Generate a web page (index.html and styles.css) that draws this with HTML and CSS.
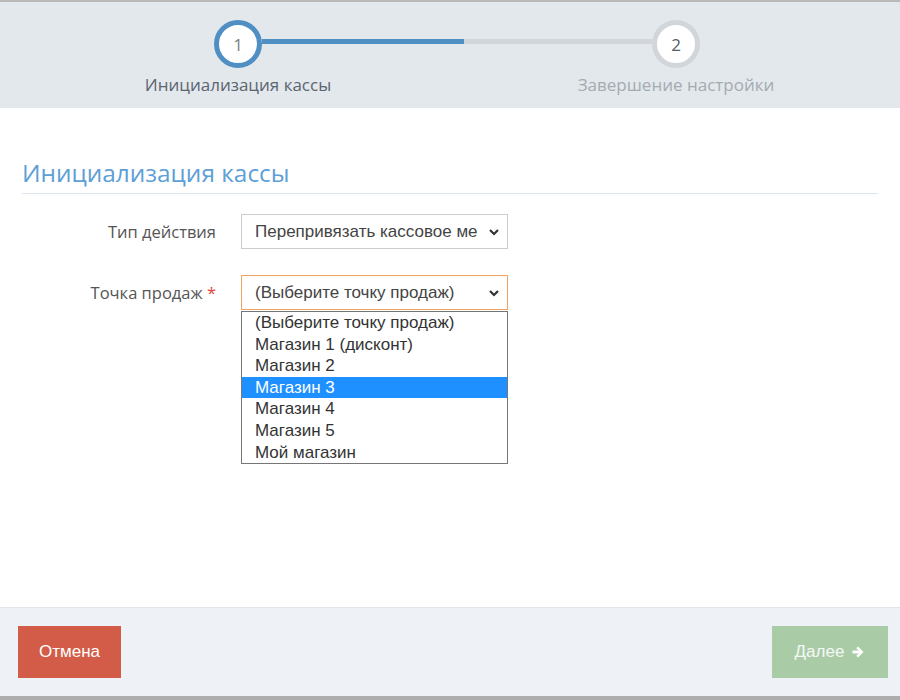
FILE: index.html
```html
<!DOCTYPE html>
<html>

<head>
    <meta charset="utf-8">
    <link rel="stylesheet" href="styles.css">
</head>

<body>
    <main class="wizard">
        <!-- steps -->
        <section class="steps">
            <div class="track">
                <div class="circle active">1</div>
                <div class="bar"><div class="bar-fill"></div></div>
                <div class="circle">2</div>
            </div>
            <div class="step-labels">
                <span class="step-label active">Инициализация кассы</span>
                <span class="step-label">Завершение настройки</span>
            </div>
        </section>

        <!-- form -->
        <section class="content">
            <h2 class="title">Инициализация кассы</h2>
            <div class="form">
                <label class="form-label">Тип действия</label>
                <div class="select">
                    <span class="select-text">Перепривязать кассовое ме</span>
                    <svg class="chevron" width="12" height="8" viewBox="0 0 12 8">
                        <polyline points="2,2 6,6 10,2" fill="none" stroke="#333" stroke-width="2.2" />
                    </svg>
                </div>

                <label class="form-label">Точка продаж <span class="req">*</span></label>
                <div class="select-wrap">
                    <div class="select focused">
                        <span class="select-text">(Выберите точку продаж)</span>
                        <svg class="chevron" width="12" height="8" viewBox="0 0 12 8">
                            <polyline points="2,2 6,6 10,2" fill="none" stroke="#333" stroke-width="2.2" />
                        </svg>
                    </div>
                    <ul class="options">
                        <li>(Выберите точку продаж)</li>
                        <li>Магазин 1 (дисконт)</li>
                        <li>Магазин 2</li>
                        <li class="hover">Магазин 3</li>
                        <li>Магазин 4</li>
                        <li>Магазин 5</li>
                        <li>Мой магазин</li>
                    </ul>
                </div>
            </div>
        </section>

        <!-- buttons -->
        <footer class="footer">
            <button class="btn btn-cancel">Отмена</button>
            <button class="btn btn-next">Далее
                <svg width="14" height="14" viewBox="0 0 14 14">
                    <path d="M1.5 5.6h6.2L5.3 3.2l1.7-1.7 5.5 5.5-5.5 5.5-1.7-1.7 2.4-2.4H1.5z" fill="#fff" />
                </svg>
            </button>
        </footer>
    </main>
</body>

</html>
```

FILE: styles.css
```css
* {
    margin: 0;
    padding: 0;
    box-sizing: border-box;
}

body {
    width: 900px;
    height: 700px;
    font-family: "Open Sans", sans-serif;
    background-color: #fff;
}

main.wizard {
    height: 700px;
    display: flex;
    flex-direction: column;
    border-top: 2px solid #b9b9b9;
    border-bottom: 4px solid #adadad;
}

/* steps */
.steps {
    height: 106px;
    background-color: #e3e8ec;
    padding-top: 18px;
}

.track {
    display: flex;
    align-items: flex-start;
    margin-left: 214px;
    width: 486px;
}

.circle {
    width: 48px;
    height: 48px;
    border-radius: 50%;
    border: 5px solid #d2d6da;
    background-color: #fff;
    display: flex;
    align-items: center;
    justify-content: center;
    font-size: 17px;
    color: #505c68;
}

.circle.active {
    border-color: #4f8fc3;
    color: #7a7f85;
}

.bar {
    flex: 1;
    height: 5px;
    margin-top: 19px;
    background-color: #d2d6da;
}

.bar-fill {
    width: 202px;
    height: 100%;
    background-color: #4f8fc3;
}

.step-labels {
    display: flex;
    gap: 238px;
    margin-left: 138px;
    margin-top: 5px;
}

.step-label {
    width: 200px;
    text-align: center;
    font-size: 17px;
    color: #a4abb2;
    white-space: nowrap;
}

.step-label.active {
    color: #5b6571;
}

/* form */
.content {
    flex: 1;
    padding: 48px 22px 0;
}

.title {
    font-weight: normal;
    font-size: 24.4px;
    line-height: 34px;
    color: #5d9fd6;
    padding-bottom: 3px;
    border-bottom: 1px solid #dde6ee;
}

.form {
    display: grid;
    grid-template-columns: 194px 267px;
    column-gap: 25px;
    row-gap: 26px;
    margin-top: 20px;
}

.form-label {
    text-align: right;
    align-self: center;
    font-size: 16.5px;
    color: #555;
}

.req {
    color: #e2453a;
}

.select-wrap {
    position: relative;
}

.select {
    height: 35px;
    border: 1px solid #ccc;
    display: flex;
    align-items: center;
    padding: 1px 7px 0 13px;
    font-family: "Liberation Sans", Arial, sans-serif;
    font-size: 17px;
    color: #444;
    background-color: #fff;
}

.select.focused {
    border-color: #f0a25e;
}

.select-text {
    flex: 1;
    white-space: nowrap;
    overflow: hidden;
}

.chevron {
    margin-left: 6px;
}

.options {
    position: absolute;
    top: 36px;
    left: 0;
    width: 100%;
    list-style: none;
    border: 1px solid #767676;
    background-color: #fff;
    font-family: "Liberation Sans", Arial, sans-serif;
    font-size: 17px;
    color: #333;
}

.options li {
    height: 21.6px;
    line-height: 21.6px;
    padding-left: 13px;
}

.options li.hover {
    background-color: #1e90ff;
    color: #fff;
}

/* buttons */
.footer {
    height: 89px;
    background-color: #eef1f6;
    border-top: 1px solid #e1e5ea;
    display: flex;
    justify-content: space-between;
    padding: 18px 12px 0 18px;
}

.btn {
    height: 52px;
    border: none;
    font-family: "Liberation Sans", Arial, sans-serif;
    font-size: 17px;
    color: #fff;
    display: flex;
    align-items: center;
    justify-content: center;
    gap: 7px;
}

.btn-cancel {
    width: 103px;
    background-color: #d35c48;
}

.btn-next {
    width: 116px;
    background-color: #a9cca7;
    color: #f4f8f4;
}
```
